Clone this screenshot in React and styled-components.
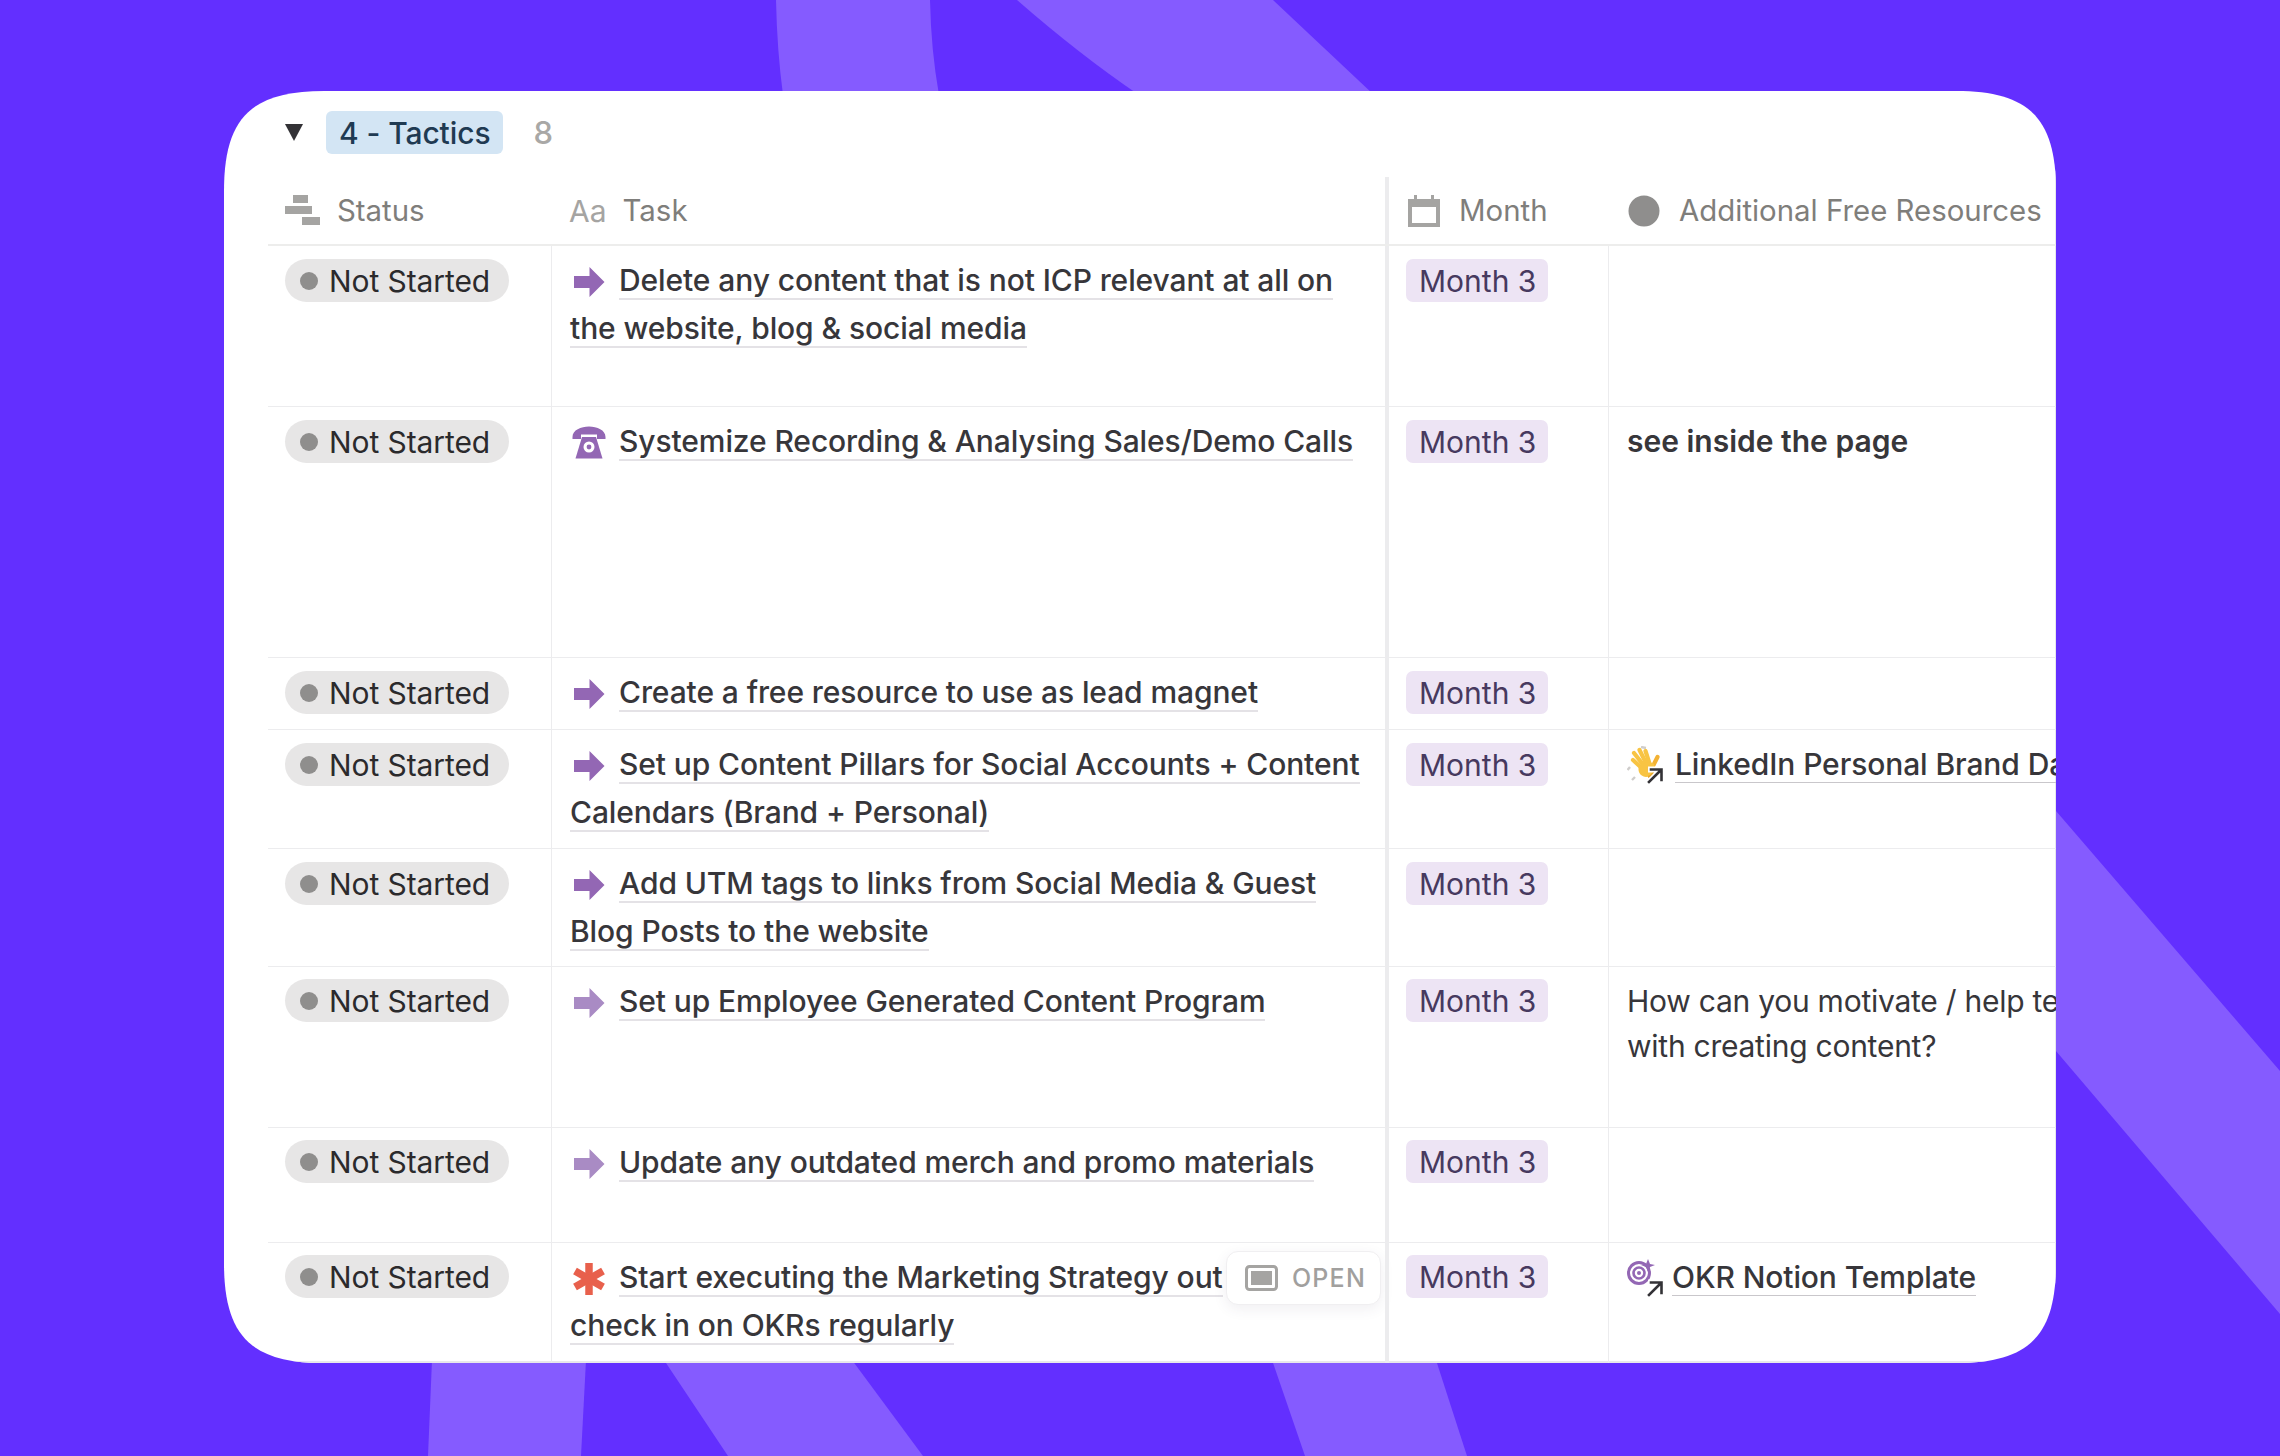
import React from "react";
import styled, { createGlobalStyle } from "styled-components";

const Global = createGlobalStyle`
  html, body { margin: 0; padding: 0; background: #632fff; }
  body { font-family: Inter, "Noto Sans", "Liberation Sans", sans-serif; }
`;

const Page = styled.div`
  position: relative;
  width: 2280px;
  height: 1456px;
  box-sizing: border-box;
  padding: 91px 224px 93px;
  background: #632fff;
  overflow: hidden;
`;
const Stripes = styled.svg`
  position: absolute;
  inset: 0;
  width: 2280px;
  height: 1456px;
`;
const Card = styled.main`
  position: relative;
  height: 1272px;
  padding-left: 44px;
  background: #fff;
  box-shadow: inset -1px -2px 0 #e8e8ea;
  overflow: hidden;
  clip-path: path("M0 100C0 27 27 0 100 0H1732C1805 0 1832 27 1832 100V1172C1832 1245 1805 1272 1732 1272H100C27 1272 0 1245 0 1172Z");
`;
const GroupBar = styled.header`
  display: flex;
  align-items: center;
  height: 86px;
  padding: 0 0 3px 17px;
  box-sizing: border-box;
`;
const GroupTag = styled.span`
  display: inline-flex;
  align-items: center;
  height: 43px;
  margin-left: 23px;
  padding: 0 13px;
  border-radius: 6px;
  background: #d3e5f4;
  color: #1f3a52;
  font-size: 30px;
  font-weight: 500;
  letter-spacing: -0.1px;
`;
const GroupCount = styled.span`
  margin-left: 30px;
  color: #a9a8a6;
  font-size: 31px;
  font-weight: 500;
`;
const Columns = "283px 834px 223px 760px";
const HeadRow = styled.div`
  display: grid;
  grid-template-columns: ${Columns};
  width: 2100px;
  height: 69px;
  box-sizing: border-box;
  border-bottom: 2px solid #ededec;
`;
const HeadCell = styled.div`
  display: flex;
  align-items: center;
  box-sizing: border-box;
  padding-left: ${(p) => p.$pad}px;
  gap: ${(p) => p.$gap}px;
  color: #7f7e7b;
  font-size: 29.4px;
  border-left: ${(p) => (p.$thick ? "4px solid #ececee" : "none")};
`;
const Row = styled.div`
  display: grid;
  grid-template-columns: ${Columns};
  width: 2100px;
  height: ${(p) => p.$h}px;
  box-sizing: border-box;
  border-bottom: ${(p) => (p.$last ? "none" : "1px solid #ececee")};
`;
const Cell = styled.div`
  position: relative;
  box-sizing: border-box;
  padding-top: ${(p) => p.$top ?? 13}px;
  white-space: nowrap;
`;
const StatusCell = styled(Cell)`
  padding-left: 17px;
`;
const Pill = styled.span`
  display: inline-flex;
  align-items: center;
  height: 43px;
  padding: 0 19px 0 15px;
  gap: 11px;
  border-radius: 22px;
  background: #e7e6e6;
  color: #2b2a2c;
  font-size: 30px;
  font-weight: 400;
  letter-spacing: -0.08px;
`;
const Dot = styled.i`
  width: 18px;
  height: 18px;
  border-radius: 50%;
  background: #8f8e8d;
`;
const TaskCell = styled(Cell)`
  padding: 10px 0 0 18px;
  border-left: 1px solid #ececee;
  font-size: 30px;
  line-height: 48px;
  font-weight: 500;
  letter-spacing: -0.1px;
  color: #37363a;
`;
const Title = styled.span`
  border-bottom: 2px solid #e4e2e6;
`;
const LeadIcon = styled.svg`
  display: inline-block;
  width: 34px;
  height: 34px;
  margin: 0 13px 0 2px;
  vertical-align: -8px;
`;
const MonthCell = styled(Cell)`
  padding-left: 17px;
  border-left: 4px solid #ececee;
`;
const MonthTag = styled.span`
  display: inline-flex;
  align-items: center;
  height: 43px;
  padding: 0 12px 0 13px;
  border-radius: 7px;
  background: #ede4f4;
  color: #47395f;
  font-size: 30px;
`;
const ResCell = styled(Cell)`
  padding: 10px 0 0 18px;
  border-left: 1px solid #ececee;
  font-size: 30px;
  line-height: 48px;
  color: #37363a;
`;
const Bold = styled.span`
  font-weight: 600;
`;
const Note = styled.p`
  margin: 0;
  padding-top: 2px;
  line-height: 45px;
  letter-spacing: -0.25px;
`;
const LinkTitle = styled.span`
  font-weight: 500;
  letter-spacing: -0.1px;
  border-bottom: 1px solid #c9c7cb;
`;
const LinkIcon = styled.svg`
  display: inline-block;
  width: 38px;
  height: 38px;
  margin-right: ${(p) => p.$gap}px;
  vertical-align: -9px;
`;
const OpenButton = styled.div`
  position: absolute;
  top: 8px;
  right: 4px;
  display: flex;
  align-items: center;
  width: 155px;
  height: 54px;
  box-sizing: border-box;
  padding-left: 18px;
  gap: 14px;
  background: #fff;
  border: 1px solid #f0eff1;
  border-radius: 12px;
  box-shadow: 0 4px 14px rgba(60, 50, 90, 0.08);
  color: #a1a09e;
  font-size: 25px;
  font-weight: 500;
  letter-spacing: 1.2px;
`;
const AaGlyph = styled.span`
  color: #a5a4a2;
  font-size: 30px;
`;

const ArrowIcon = ({ color = "#9367b4" }) => (
  <LeadIcon viewBox="0 0 34 34" aria-hidden="true">
    <path d="M2 11H17.5V2L32.5 17L17.5 32V23H2Z" fill={color} />
  </LeadIcon>
);
const PhoneIcon = () => (
  <LeadIcon viewBox="0 0 34 34" aria-hidden="true">
    <path d="M0.5 11C0.5 4 9 0.5 17 0.5S33.5 4 33.5 11V13H25V8.5H9V13H0.5Z" fill="#9367b4" />
    <path d="M10 11H24L30.5 32.5H3.5Z" fill="#9367b4" />
    <circle cx="17" cy="21" r="5.5" fill="#fff" />
    <circle cx="17" cy="21" r="2.4" fill="#9367b4" />
  </LeadIcon>
);
const AsteriskIcon = () => (
  <LeadIcon viewBox="0 0 34 34" aria-hidden="true">
    <g stroke="#e8604c" strokeWidth="7.5">
      <path d="M17 1V33" />
      <path d="M3 9L31 25" />
      <path d="M31 9L3 25" />
    </g>
  </LeadIcon>
);
const LinkArrow = () => (
  <g fill="none" strokeLinecap="square">
    <path d="M22 36L34 24M24 23.5H34.5V34" stroke="#fff" strokeWidth="6" />
    <path d="M22 36L34 24M24 23.5H34.5V34" stroke="#333236" strokeWidth="2.6" />
  </g>
);
const HandIcon = () => (
  <LinkIcon $gap={10} viewBox="0 0 38 38" aria-hidden="true">
    <path d="M3 21L0.5 24M8 31L5 34M14 1L19 2" stroke="#cfcdcb" strokeWidth="2.4" fill="none" />
    <g fill="none" stroke="#f8c443" strokeWidth="4.2" strokeLinecap="round">
      <path d="M18 25L6 14" />
      <path d="M18 21L7 7" />
      <path d="M20 19L12.5 4" />
      <path d="M23 19L18.5 5" />
      <path d="M24 24L30.5 11" stroke="#f3b233" />
    </g>
    <path d="M12 20C15 16 23 15 27 18C29 24 26 31 19 31C14 31 10 26 12 20Z" fill="#f8c443" />
    <path d="M21 31C25 30 27 26 27 21" stroke="#eba92e" strokeWidth="2" fill="none" />
    <LinkArrow />
  </LinkIcon>
);
const TargetIcon = () => (
  <LinkIcon $gap={7} viewBox="0 0 38 38" aria-hidden="true">
    <g fill="none" stroke="#9367b4">
      <circle cx="12" cy="14" r="10.5" strokeWidth="3" />
      <circle cx="12" cy="14" r="5.5" strokeWidth="2.6" />
    </g>
    <circle cx="12" cy="14" r="2" fill="#9367b4" />
    <path d="M21 0L23 5L28 6L23 8L21 13L19 8L14 6L19 5Z" fill="#9367b4" />
    <LinkArrow />
  </LinkIcon>
);

const StatusGlyph = () => (
  <svg width="35" height="31" viewBox="0 0 35 31" aria-hidden="true">
    <path d="M8 0H23V8H8ZM0 11H27V19H0ZM17 22H35V30H17Z" fill="#a5a4a2" />
  </svg>
);
const CalendarGlyph = () => (
  <svg width="32" height="32" viewBox="0 0 32 32" aria-hidden="true">
    <path d="M0 4H6V0H9V4H23V0H26V4H32V32H0ZM4 12V28H28V12Z" fill="#a5a4a2" fillRule="evenodd" />
  </svg>
);
const CircleGlyph = () => (
  <svg width="32" height="32" viewBox="0 0 32 32" aria-hidden="true">
    <circle cx="16" cy="16" r="15.5" fill="#8f8e8d" />
  </svg>
);

const rows = [
  { h: 161, icon: <ArrowIcon />, lines: ["Delete any content that is not ICP relevant at all on", "the website, blog & social media"] },
  { h: 251, icon: <PhoneIcon />, lines: ["Systemize Recording & Analysing Sales/Demo Calls"], res: <Bold>see inside the page</Bold> },
  { h: 72, icon: <ArrowIcon />, lines: ["Create a free resource to use as lead magnet"] },
  { h: 119, icon: <ArrowIcon />, lines: ["Set up Content Pillars for Social Accounts + Content", "Calendars (Brand + Personal)"], res: <><HandIcon /><LinkTitle>LinkedIn Personal Brand Dashboard</LinkTitle></> },
  { h: 118, icon: <ArrowIcon />, lines: ["Add UTM tags to links from Social Media & Guest", "Blog Posts to the website"] },
  { h: 161, top: 12, icon: <ArrowIcon color="#a98bc4" />, lines: ["Set up Employee Generated Content Program"], res: <Note>How can you motivate / help team members<br />with creating content?</Note> },
  { h: 115, top: 12, icon: <ArrowIcon color="#a98bc4" />, lines: ["Update any outdated merch and promo materials"] },
  { h: 120, top: 12, icon: <AsteriskIcon />, lines: ["Start executing the Marketing Strategy out", "check in on OKRs regularly"], res: <><TargetIcon /><LinkTitle>OKR Notion Template</LinkTitle></>, open: true, last: true },
];

export default function App() {
  return (
    <>
      <Global />
      <Page>
        <Stripes viewBox="0 0 2280 1456" aria-hidden="true">
          <g fill="#855bff">
            <path d="M776 0H930Q931 50 939 95H783Q777 50 776 0Z" />
            <path d="M1017 0H1273L1374 95H1139Q1080 55 1017 0Z" />
            <path d="M2050 804L2280 1071V1314L2050 1044Z" />
            <path d="M432 1360H586L581 1456H428Z" />
            <path d="M664 1360H852L923 1456H728Z" />
            <path d="M1272 1360H1436L1467 1456H1305Z" />
          </g>
        </Stripes>
        <Card>
          <GroupBar>
            <svg width="18" height="17" viewBox="0 0 18 17" aria-hidden="true">
              <path d="M0 0H18L9 17Z" fill="#333236" />
            </svg>
            <GroupTag>4 - Tactics</GroupTag>
            <GroupCount>8</GroupCount>
          </GroupBar>
          <HeadRow>
            <HeadCell $pad={17} $gap={17}><StatusGlyph />Status</HeadCell>
            <HeadCell $pad={18} $gap={16}><AaGlyph>Aa</AaGlyph>Task</HeadCell>
            <HeadCell $pad={19} $gap={19} $thick><CalendarGlyph />Month</HeadCell>
            <HeadCell $pad={20} $gap={19}><CircleGlyph />Additional Free Resources</HeadCell>
          </HeadRow>
          {rows.map((r, i) => (
            <Row key={i} $h={r.h} $last={r.last}>
              <StatusCell $top={r.top}><Pill><Dot />Not Started</Pill></StatusCell>
              <TaskCell>
                {r.icon}
                <Title>{r.lines[0]}</Title>
                {r.lines[1] && <><br /><Title>{r.lines[1]}</Title></>}
                {r.open && (
                  <OpenButton>
                    <svg width="33" height="26" viewBox="0 0 33 26" aria-hidden="true">
                      <rect x="1.5" y="1.5" width="30" height="23" rx="3" fill="none" stroke="#a5a4a2" strokeWidth="3" />
                      <rect x="6" y="6" width="21" height="14" fill="#a5a4a2" />
                    </svg>
                    OPEN
                  </OpenButton>
                )}
              </TaskCell>
              <MonthCell $top={r.top}><MonthTag>Month 3</MonthTag></MonthCell>
              <ResCell>{r.res}</ResCell>
            </Row>
          ))}
        </Card>
      </Page>
    </>
  );
}
